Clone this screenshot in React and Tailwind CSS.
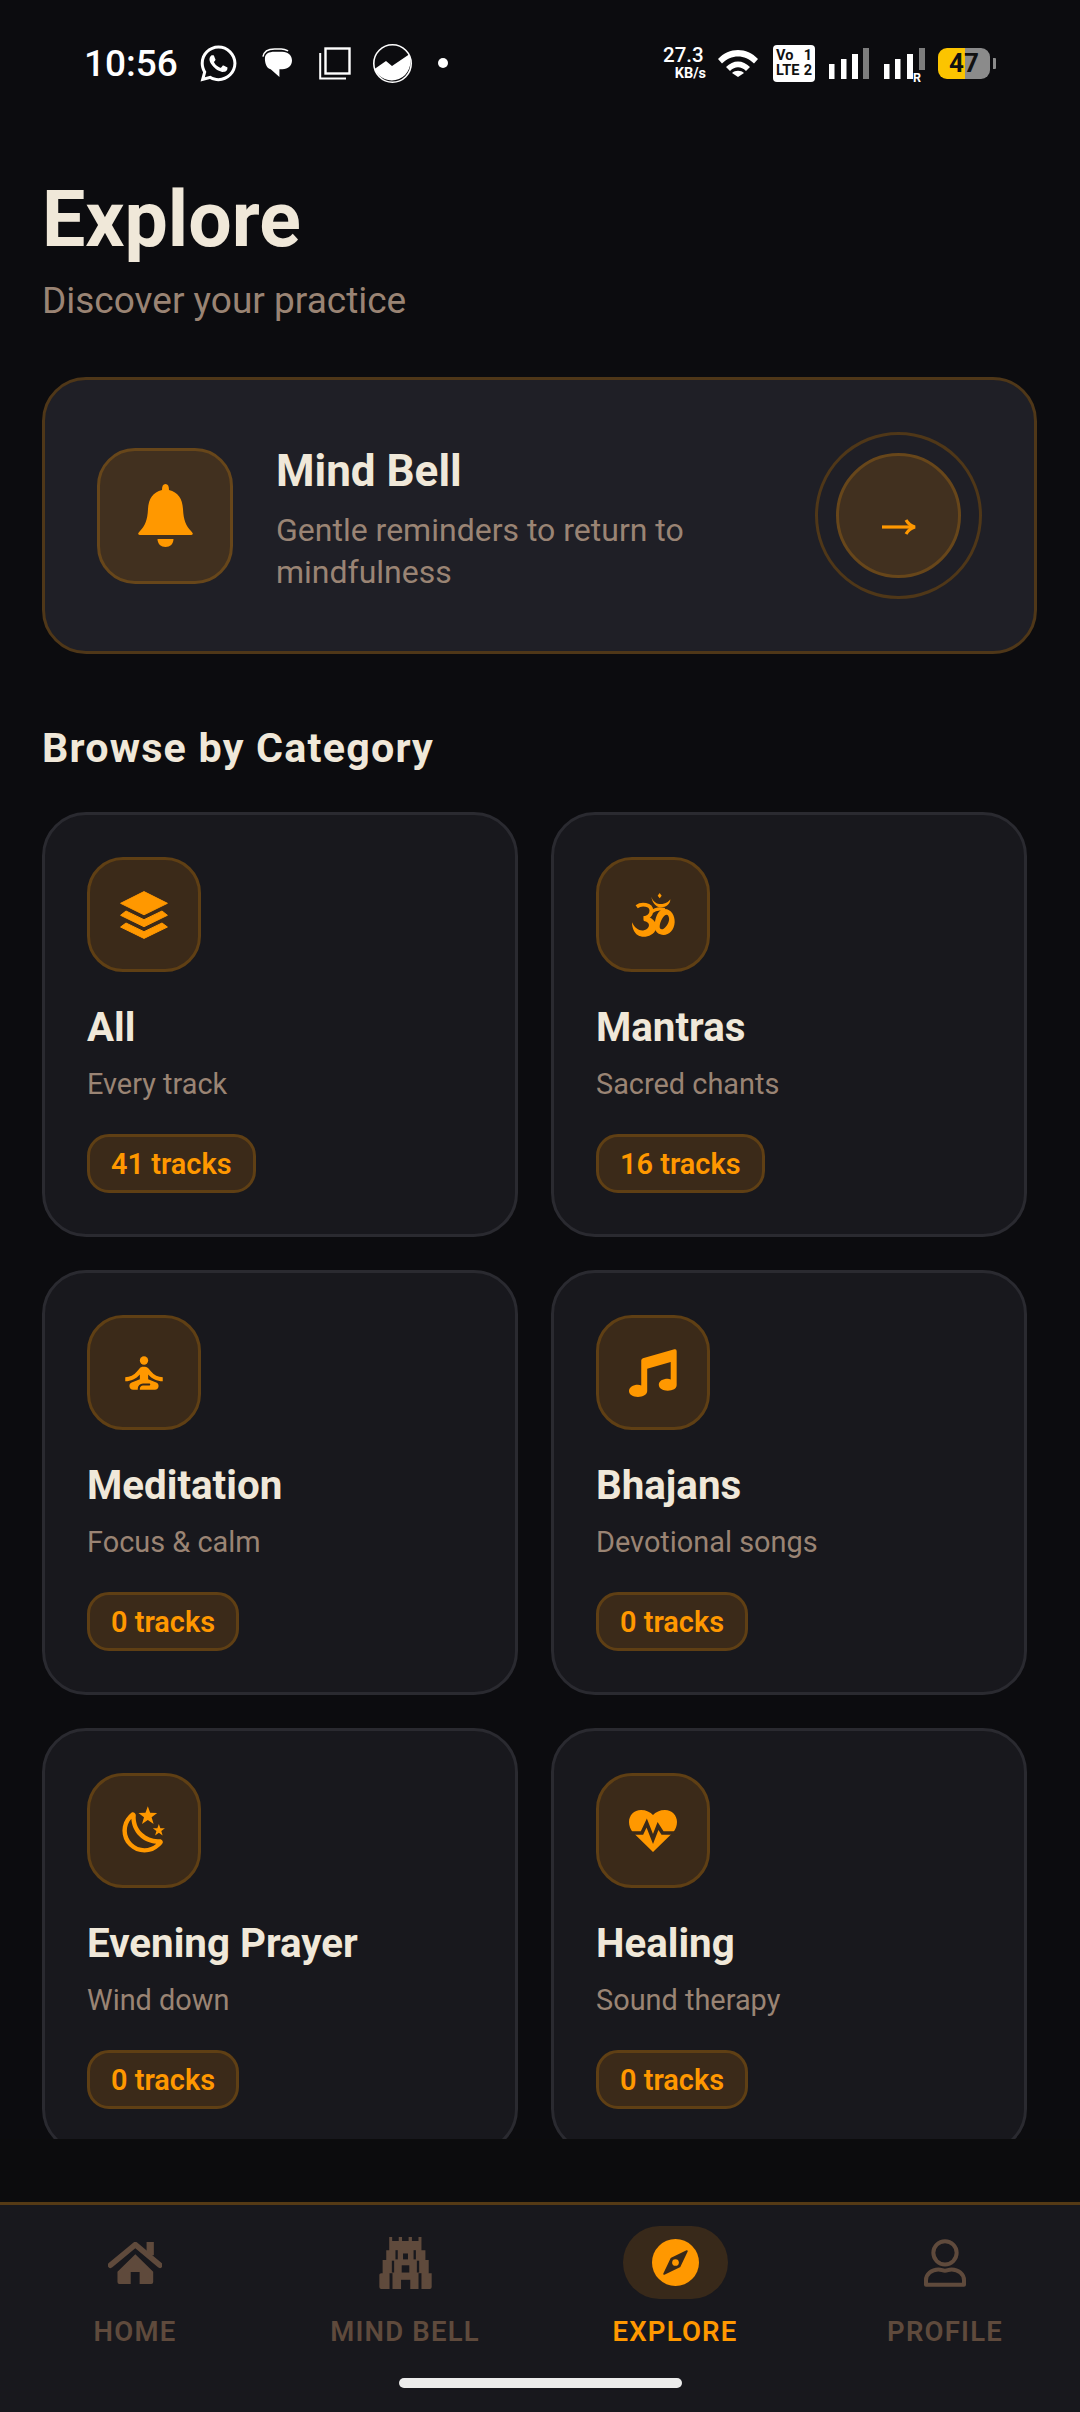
import { FaWhatsapp } from "react-icons/fa";
import { MdSelfImprovement } from "react-icons/md";

const ORANGE = "#ff9800";

function Bell() {
  return (
    <svg width="55" height="63" viewBox="0 0 55 63" fill={ORANGE}>
      <path d="M27.5 0C30 0 31 2 31 6C40 8 44.5 15 45 25C45.5 36 48 42 53 47C56 50 55 51 52 51H3C0 51-1 50 2 47C7 42 9.5 36 10 25C10.5 15 15 8 24 6C24 2 25 0 27.5 0Z" />
      <path d="M19.5 55H35.5C35.5 60 32 63 27.5 63C23 63 19.5 60 19.5 55Z" />
    </svg>
  );
}

function Layers() {
  return (
    <svg width="48" height="48" viewBox="0 0 48 48" fill={ORANGE} stroke={ORANGE} strokeWidth="1" strokeLinejoin="round">
      <path d="M24 .6L47.4 12.3L24 23.8L.6 12.3Z" />
      <path d="M.6 24.3L6 20L24 28.7L42 20L47.4 24.3L24 35.7Z" />
      <path d="M.6 36L6 32L24 40.7L42 32L47.4 36L24 47.4Z" />
    </svg>
  );
}

function Om() {
  return (
    <svg width="43" height="44" viewBox="277 277 129 132" fill={ORANGE}>
      <path d="M360 277L366 285L360 293L354 285Z" />
      <path d="M335 288C340 305 355 312 368 310C380 308 388 303 392 296C392 310 380 320 365 320C350 320 338 308 335 288Z" />
      <path d="M291 318C305 308 335 310 335 330C335 345 322 352 312 352" fill="none" stroke={ORANGE} strokeWidth="11" />
      <path d="M312 346C340 348 354 368 349 385C342 407 310 414 295 404C282 396 277 380 277 365C285 383 300 392 313 389C326 386 331 375 326 368C322 362 316 362 312 360Z" />
      <path d="M335 334C345 326 360 322 375 327" fill="none" stroke={ORANGE} strokeWidth="10" />
      <path
        fillRule="evenodd"
        d="M375 325C395 325 406 345 405 365C404 388 388 403 372 403C358 403 345 393 345 380C345 350 355 325 375 325ZM381 342C372 342 362 360 360 376C359 386 366 388 372 384C382 378 390 362 388 352C387 346 385 342 381 342Z"
      />
    </svg>
  );
}

function Music() {
  return (
    <svg width="48" height="48" viewBox="177 173 145 145" fill={ORANGE}>
      <path d="M214 208Q214 203 219 201L314 174Q321 172 321 180V282C321 293 309 299 294 299C279 299 267 292 267 281C267 270 279 263 294 263C297 263 300 264 303 265V212L232 233V300C232 311 219 318 204 318C189 318 177 311 177 300C177 289 189 281 204 281C208 281 211 282 214 283Z" />
    </svg>
  );
}

function MoonStars() {
  return (
    <svg width="53" height="53" viewBox="0 0 24 24" fill={ORANGE}>
      <path d="M17.75,4.09L15.22,6.03L16.13,9.09L13.5,7.28L10.87,9.09L11.78,6.03L9.25,4.09L12.44,4L13.5,1L14.56,4L17.75,4.09M21.25,11L19.61,12.25L20.2,14.23L18.5,13.06L16.8,14.23L17.39,12.25L15.75,11L17.81,10.95L18.5,9L19.19,10.95L21.25,11M18.97,15.95C19.8,15.87 20.69,17.05 20.16,17.8C19.84,18.25 19.5,18.67 19.08,19.07C15.17,23 8.84,23 4.94,19.07C1.03,15.17 1.03,8.83 4.94,4.93C5.34,4.53 5.76,4.17 6.21,3.85C6.96,3.32 8.14,4.21 8.06,5.04C7.79,7.9 8.75,10.87 10.95,13.06C13.14,15.26 16.1,16.22 18.97,15.95M17.33,17.97C14.5,17.81 11.7,16.64 9.53,14.5C7.36,12.31 6.2,9.5 6.04,6.68C3.23,9.82 3.34,14.64 6.35,17.66C9.37,20.67 14.19,20.78 17.33,17.97Z" />
    </svg>
  );
}

function HeartPulse() {
  return (
    <svg width="48" height="42" viewBox="0 0 48 42" fill={ORANGE}>
      <path d="M24 5C21.5 2 17 0 12 0C5 0 0 5.5 0 12C0 16 1.5 19 3.5 22L24 42L44.5 22C46.5 19 48 16 48 12C48 5.5 43 0 36 0C31 0 26.5 2 24 5Z" />
      <path d="M-2 23H13L17.7 13L24 29L29 16L33.5 23H50" fill="none" stroke="#3b2a19" strokeWidth="3.6" strokeLinejoin="miter" />
    </svg>
  );
}

function Arrow() {
  return (
    <svg width="34" height="16" viewBox="0 0 34 16" fill="none" stroke={ORANGE} strokeWidth="3.2">
      <path d="M0 8H31" />
      <path d="M24 1C26 4.5 29 7 33 8C29 9 26 11.5 24 15" />
    </svg>
  );
}

function HomeIcon() {
  return (
    <svg width="54" height="42" viewBox="140 155 162 127" fill="#5f4a3c">
      <path d="M256 155H278V195H256Z" />
      <path d="M147 225L222 163L296 225" fill="none" stroke="#5f4a3c" strokeWidth="17" strokeLinecap="round" strokeLinejoin="round" />
      <path d="M168 245L222 192L276 245V276Q276 282 270 282H235V246H208V282H174Q168 282 168 276Z" />
    </svg>
  );
}

function Temple() {
  return (
    <svg width="53" height="52" viewBox="954 140 159 158" fill="#5f4a3c">
      <path d="M984 140H993V152H1013V140H1023V152H1043V140H1053V152H1073V140H1082V180H1094V210H1104V250H1113V292Q1113 298 1107 298H960Q954 298 954 292V255Q954 250 960 250H964V210H975V180H984Z" />
      <g fill="#18181d">
        <rect x="1003" y="180" width="7" height="28" />
        <rect x="1058" y="180" width="7" height="28" />
        <rect x="1026" y="190" width="15" height="18" />
        <rect x="992" y="212" width="7" height="36" />
        <rect x="1068" y="212" width="7" height="36" />
        <rect x="1022" y="226" width="23" height="22" />
        <rect x="985" y="250" width="9" height="48" />
        <rect x="1073" y="250" width="9" height="48" />
        <rect x="1020" y="270" width="28" height="28" />
      </g>
    </svg>
  );
}

function Compass() {
  return (
    <svg width="47" height="47" viewBox="-70 -70 140 140">
      <circle r="70" fill={ORANGE} />
      <path d="M34 -34L12 12L-34 34L-12 -12Z" fill="#38291a" stroke="#38291a" strokeWidth="5" strokeLinejoin="round" />
      <circle r="10" fill={ORANGE} />
    </svg>
  );
}

function Person() {
  return (
    <svg width="42" height="48" viewBox="1029 117 126 143" fill="none" stroke="#5f4a3c" strokeWidth="12" strokeLinejoin="round">
      <circle cx="1092" cy="158" r="35" />
      <path d="M1035 254V240C1035 222 1052 208 1072 208C1082 208 1084 212 1092 212C1100 212 1102 208 1112 208C1132 208 1149 222 1149 240V254Z" />
    </svg>
  );
}

function StatusBar() {
  return (
    <div className="flex h-[126px] items-center justify-between pl-[84px] pr-[84px] text-white font-['Roboto',sans-serif]">
      <div className="flex items-center">
        <span className="text-[37px] font-medium leading-none">10:56</span>
        <FaWhatsapp size={41} className="ml-[20px]" />
        <svg width="32" height="30" viewBox="0 0 31 31" className="ml-[22px]" fill="white">
          <path d="M3 11C3 6 7 4 13 4H21C27 4 31 8 31 13C31 18 27 22 21 22H18V30L9 22C5 21 3 16 3 11Z" />
          <path d="M1 9C2 3 7 1 13 1H20C23 1 25 2 27 3" fill="none" stroke="white" strokeWidth="1.6" />
        </svg>
        <svg width="32" height="33" viewBox="0 0 32 33" className="ml-[26px]" fill="none" stroke="white">
          <rect x="6.5" y="1.5" width="24" height="25" strokeWidth="2.4" />
          <path d="M1.2 6V31.5H27" strokeWidth="2" />
        </svg>
        <svg width="39" height="39" viewBox="0 0 39 39" className="ml-[22px]">
          <circle cx="19.5" cy="19.5" r="18.7" fill="none" stroke="white" strokeWidth="1.6" />
          <path d="M1.5 25L13 17L19 22L36 10.5A18.7 18.7 0 0 1 1.5 25Z" fill="white" />
        </svg>
        <span className="ml-[26px] h-[10px] w-[10px] rounded-full bg-white" />
      </div>
      <div className="flex items-center">
        <div className="flex w-[43px] flex-col items-end font-medium">
          <span className="w-full text-[20.5px] leading-[18px]">27.3</span>
          <span className="mt-[3px] text-[14.5px] font-bold leading-[13px]">KB/s</span>
        </div>
        <svg width="40" height="28" viewBox="0 0 40 28" className="ml-[12px]" fill="white">
          <path d="M0 10C11 -2 29 -2 40 10L36 14.5C27 5 13 5 4 14.5Z" />
          <path d="M8 18C15 10.5 25 10.5 32 18L28 22C23 17 17 17 12 22Z" />
          <path d="M14 24C17 21 23 21 26 24L20 28Z" />
        </svg>
        <div className="ml-[15px] flex h-[37px] w-[42px] flex-col justify-center rounded-[4px] bg-white px-[3px] text-[14.5px] font-bold leading-[15px] text-[#111]">
          <div className="flex justify-between"><span>Vo</span><span>1</span></div>
          <div className="flex justify-between"><span>LTE</span><span>2</span></div>
        </div>
        <svg width="40" height="31" viewBox="0 0 40 31" className="ml-[14px]" fill="white">
          <rect x="0" y="16" width="5.5" height="15" />
          <rect x="12" y="11" width="5.5" height="20" />
          <rect x="23" y="6" width="6" height="25" />
          <rect x="34" y="0" width="6" height="31" fill="#7d7d7d" />
        </svg>
        <div className="relative ml-[15px] h-[31px] w-[41px]">
          <svg width="41" height="31" viewBox="0 0 41 31" fill="white">
            <rect x="0" y="16" width="5.5" height="15" />
            <rect x="11" y="11" width="5.5" height="20" />
            <rect x="23" y="6" width="6" height="25" />
            <rect x="35" y="0" width="6" height="22" fill="#7d7d7d" />
          </svg>
          <span className="absolute left-[29px] top-[24px] text-[12.5px] font-bold leading-[12px]">R</span>
        </div>
        <div className="ml-[13px] flex items-center">
          <div className="flex h-[31px] w-[52px] items-center justify-center rounded-[9px] bg-[linear-gradient(90deg,#fcc400_52%,#8b8b8b_52%)] text-[26px] font-bold leading-none text-[#111]">
            47
          </div>
          <span className="ml-[3px] h-[11px] w-[3px] rounded-r-[1px] bg-[#8b8b8b]" />
        </div>
      </div>
    </div>
  );
}

function CategoryCard({ icon, title, subtitle, tracks }) {
  return (
    <div className="flex h-[425px] flex-col rounded-[44px] border-[3px] border-[#2a2a30] bg-[#18181d] pl-[42px] pt-[42px]">
      <div className="flex h-[115px] w-[114px] items-center justify-center rounded-[36px] border-[3px] border-[#5f3f14] bg-[#3b2a19]">
        {icon}
      </div>
      <div className="mt-[32px] text-[40.3px] font-bold leading-[48px] text-[#f0e8d9]">{title}</div>
      <div className="mt-[12px] text-[28.9px] leading-[40px] text-[#9a8474]">{subtitle}</div>
      <div className="mt-[30px] flex h-[59px] w-fit items-center rounded-[22px] border-[3px] border-[#5f3f14] bg-[#3b2a19] px-[21px] pt-[2px] text-[28.9px] font-semibold text-[#ff9800]">
        {tracks}
      </div>
    </div>
  );
}

function NavItem({ icon, label, active }) {
  return (
    <div className="flex flex-col items-center">
      <div className={`flex h-[73px] w-[105px] items-center justify-center rounded-full ${active ? "bg-[#38291a]" : ""}`}>
        {icon}
      </div>
      <span className={`mt-[17px] text-[27.5px] font-semibold leading-[32px] tracking-[1.2px] ${active ? "text-[#ff9800]" : "text-[#5f4a3c]"}`}>
        {label}
      </span>
    </div>
  );
}

const categories = [
  { icon: <Layers />, title: "All", subtitle: "Every track", tracks: "41 tracks" },
  { icon: <Om />, title: "Mantras", subtitle: "Sacred chants", tracks: "16 tracks" },
  { icon: <MdSelfImprovement size={50} color={ORANGE} />, title: "Meditation", subtitle: "Focus & calm", tracks: "0 tracks" },
  { icon: <Music />, title: "Bhajans", subtitle: "Devotional songs", tracks: "0 tracks" },
  { icon: <MoonStars />, title: "Evening Prayer", subtitle: "Wind down", tracks: "0 tracks" },
  { icon: <HeartPulse />, title: "Healing", subtitle: "Sound therapy", tracks: "0 tracks" },
];

export default function App() {
  return (
    <div className="flex h-[2412px] w-[1080px] flex-col overflow-hidden bg-[#0c0c0f] font-['Roboto',sans-serif]">
      <StatusBar />
      <main className="h-[2013px] overflow-hidden pl-[42px]">
        <h1 className="mt-[52px] text-[77px] font-bold leading-[84px] text-[#f0e8d9]">Explore</h1>
        <p className="mt-[15px] text-[37px] leading-[48px] text-[#9a8474]">Discover your practice</p>

        <section className="mt-[52px] flex h-[277px] w-[995px] items-center rounded-[44px] border-[3px] border-[#4f3718] bg-[#1f1f26] pl-[52px] pr-[52px]">
          <div className="flex h-[136px] w-[136px] shrink-0 items-center justify-center rounded-[38px] border-[3px] border-[#67461a] bg-[#41301f]">
            <Bell />
          </div>
          <div className="ml-[43px] flex-1 pt-[7px]">
            <div className="text-[44px] font-bold leading-[52px] text-[#f0e8d9]">Mind Bell</div>
            <div className="mt-[12px] w-[460px] text-[32px] leading-[42px] text-[#9a8474]">
              Gentle reminders to return to mindfulness
            </div>
          </div>
          <div className="flex h-[167px] w-[167px] shrink-0 items-center justify-center rounded-full border-[3px] border-[#4f3718]">
            <div className="flex h-[125px] w-[125px] items-center justify-center rounded-full border-[3px] border-[#67461a] bg-[#41301f] pt-[22px]">
              <Arrow />
            </div>
          </div>
        </section>

        <h2 className="mt-[70px] text-[41.25px] font-bold leading-[48px] tracking-[1.2px] text-[#f0e8d9]">Browse by Category</h2>

        <div className="mt-[40px] grid grid-cols-[476px_476px] gap-x-[33px] gap-y-[33px]">
          {categories.map((c) => (
            <CategoryCard key={c.title} {...c} />
          ))}
        </div>
      </main>
      <div className="h-[63px] bg-[#0c0c0d]" />
      <nav className="flex flex-1 flex-col border-t-[3px] border-[#553a15] bg-[#18181d] pt-[21px]">
        <div className="grid grid-cols-4">
          <NavItem icon={<HomeIcon />} label="HOME" />
          <NavItem icon={<Temple />} label="MIND BELL" />
          <NavItem icon={<Compass />} label="EXPLORE" active />
          <NavItem icon={<Person />} label="PROFILE" />
        </div>
        <div className="mx-auto mt-[30px] h-[10px] w-[283px] rounded-full bg-[#ececec]" />
      </nav>
    </div>
  );
}
